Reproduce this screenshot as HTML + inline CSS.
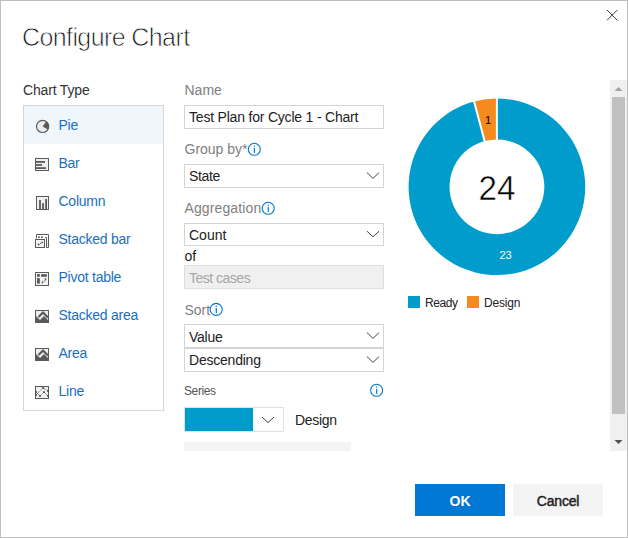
<!DOCTYPE html>
<html><head><meta charset="utf-8">
<style>
*{margin:0;padding:0;box-sizing:border-box}
html,body{width:628px;height:538px;overflow:hidden;background:#fff}
body{position:relative;font-family:"Liberation Sans",sans-serif;color:#222}
.frame{position:absolute;left:0;top:0;width:628px;height:538px;border:1px solid #bfbfbf}
.t{position:absolute;white-space:nowrap;line-height:1;font-size:14px}
.box{position:absolute;border:1px solid #d4d4d4;background:#fff}
.lbl{color:#808080}
.item{color:#1a6fc2;letter-spacing:-0.25px}
.chev{position:absolute}
</style></head><body>
<div class="frame"></div>

<!-- close X -->
<svg style="position:absolute;left:606px;top:9px" width="13" height="13" viewBox="0 0 13 13">
<path d="M1 1L11.3 11.3M11.3 1L1 11.3" stroke="#222" stroke-width="0.9" fill="none"/>
</svg>

<div class="t" style="left:22px;top:24.6px;font-size:25px;color:#111;letter-spacing:-0.6px;-webkit-text-stroke:0.75px #fff">Configure Chart</div>

<div class="t" style="left:23px;top:83px;color:#333;letter-spacing:-0.17px">Chart Type</div>

<!-- list box -->
<div class="box" style="left:23px;top:105px;width:141px;height:306px;border-color:#d6d6d6"></div>
<div style="position:absolute;left:24px;top:106px;width:139px;height:38px;background:#eff6fc"></div>

<div class="t item" style="left:58.5px;top:118px">Pie</div>
<div class="t item" style="left:58.5px;top:156px">Bar</div>
<div class="t item" style="left:58.5px;top:194px">Column</div>
<div class="t item" style="left:58.5px;top:232px">Stacked bar</div>
<div class="t item" style="left:58.5px;top:270px">Pivot table</div>
<div class="t item" style="left:58.5px;top:308px">Stacked area</div>
<div class="t item" style="left:58.5px;top:346px">Area</div>
<div class="t item" style="left:58.5px;top:384px">Line</div>

<!-- middle column -->
<div class="t lbl" style="left:184.5px;top:83px">Name</div>
<div class="box" style="left:184px;top:105px;width:200px;height:24px"></div>
<div class="t" style="left:189px;top:110px;letter-spacing:-0.2px">Test Plan for Cycle 1 - Chart</div>

<div class="t lbl" style="left:184.5px;top:142px">Group by*</div>
<div class="box" style="left:184px;top:164px;width:200px;height:24px"></div>
<div class="t" style="left:189px;top:169px;letter-spacing:-0.35px">State</div>

<div class="t lbl" style="left:184.5px;top:201px;letter-spacing:0.12px">Aggregation</div>
<div class="box" style="left:184px;top:223px;width:200px;height:23px"></div>
<div class="t" style="left:189px;top:228px">Count</div>
<div class="t" style="left:184.5px;top:249px">of</div>
<div class="box" style="left:184px;top:265px;width:200px;height:24px;background:#f0f0f0;border-color:#dedede"></div>
<div class="t" style="left:189px;top:271px;color:#a6a6a6;letter-spacing:-0.5px">Test cases</div>

<div class="t lbl" style="left:184.5px;top:303px">Sort</div>
<div class="box" style="left:184px;top:324px;width:200px;height:24px"></div>
<div class="t" style="left:189px;top:330px;letter-spacing:-0.25px">Value</div>
<div class="box" style="left:184px;top:348px;width:200px;height:24px"></div>
<div class="t" style="left:189px;top:353px;letter-spacing:-0.22px">Descending</div>

<div class="t" style="left:184px;top:384.7px;font-size:12px;color:#555;letter-spacing:-0.4px">Series</div>
<div class="box" style="left:184px;top:407px;width:100px;height:25px;border-color:#e0e0e0"></div>
<div style="position:absolute;left:185px;top:408px;width:68px;height:23px;background:#009ccc"></div>
<div class="t" style="left:295px;top:413px;letter-spacing:-0.3px">Design</div>
<div style="position:absolute;left:184px;top:442px;width:167px;height:9px;background:#f4f4f4"></div>

<!-- chart -->
<svg style="position:absolute;left:0;top:0" width="628" height="538">
<!-- donut -->
<path d="M496.90 98.50 A88.3 88.3 0 1 1 474.05 101.51 L484.63 141.02 A47.4 47.4 0 1 0 496.90 139.40 Z" fill="#009ccc"/>
<path d="M474.05 101.51 A88.3 88.3 0 0 1 496.90 98.50 L496.90 139.40 A47.4 47.4 0 0 0 484.63 141.02 Z" fill="#f58b1f"/>
<path d="M496.9 140 L496.9 97 M484.89 141.98 L473.79 100.54" stroke="#fff" stroke-width="2" fill="none"/>
<text transform="translate(497 0) scale(0.95 1) translate(-497 0)" x="497" y="200" font-family="Liberation Sans" font-size="35" text-anchor="middle" fill="#000" stroke="#fff" stroke-width="0.5">24</text>
<text x="488" y="124" font-family="Liberation Sans" font-size="11" text-anchor="middle" fill="#000">1</text>
<text x="505.5" y="259" font-family="Liberation Sans" font-size="11" text-anchor="middle" fill="#fff">23</text>

<!-- info icons -->
<g fill="none" stroke="#0078d4" stroke-width="1.1">
<circle cx="254.3" cy="149.3" r="6"/>
<circle cx="268.2" cy="208.3" r="6"/>
<circle cx="216.2" cy="309.4" r="6"/>
<circle cx="376.6" cy="390.3" r="6"/>
</g>
<g fill="#0078d4">
<rect x="253.8" y="145.6" width="1.2" height="1.2"/><rect x="253.8" y="147.9" width="1.2" height="5"/>
<rect x="267.7" y="204.6" width="1.2" height="1.2"/><rect x="267.7" y="206.9" width="1.2" height="5"/>
<rect x="215.7" y="305.7" width="1.2" height="1.2"/><rect x="215.7" y="308" width="1.2" height="5"/>
<rect x="376.1" y="386.6" width="1.2" height="1.2"/><rect x="376.1" y="388.9" width="1.2" height="5"/>
</g>

<!-- chevrons -->
<g fill="none" stroke="#444" stroke-width="1">
<path d="M367 172.7 L373 178.3 L379 172.7"/>
<path d="M367 231.2 L373 236.8 L379 231.2"/>
<path d="M367 332.7 L373 338.3 L379 332.7"/>
<path d="M367 356.7 L373 362.3 L379 356.7"/>
<path d="M262 417 L268 422.6 L274 417"/>
</g>


<!-- chart type icons -->
<g stroke="#5a5a5a" stroke-width="1">
<!-- pie -->
<circle cx="42.6" cy="126.4" r="6.1" fill="#ececec" stroke-width="1.2"/>
<path d="M42.6 126.4 L46.2 121.4 A6.1 6.1 0 0 1 47.9 129.5 Z" fill="#5a5a5a" stroke="none"/>
<!-- bar -->
<rect x="35.5" y="158.5" width="13" height="12" fill="#efefef"/>
<g stroke="none" fill="#5a5a5a"><rect x="36" y="161" width="9" height="1.8"/><rect x="36" y="164.1" width="6" height="1.8"/><rect x="36" y="167.2" width="10" height="1.8"/></g>
<!-- column -->
<rect x="36.5" y="196.5" width="12" height="13" fill="#efefef"/>
<g stroke="none" fill="#5a5a5a"><rect x="39.1" y="200" width="1.8" height="9.5"/><rect x="42.1" y="203.2" width="1.8" height="6.3"/><rect x="45.2" y="199" width="1.8" height="10.5"/></g>
<!-- stacked bar -->
<path d="M36.5 238.5 V234.5 H48.5 V247.5 H46.5 V237.5 H45" fill="none"/>
<rect x="35.5" y="239.5" width="9" height="8" fill="#f4f4f4"/>
<g stroke="none" fill="#5a5a5a"><rect x="38.1" y="236.4" width="1.7" height="1.6"/><rect x="41.1" y="236.4" width="1.7" height="1.6"/></g>
<path d="M37.5 244.5 L39.5 244.5 L41.5 242.5 L43 242.5 M38.5 243.5 V245.5 M42 241.5 V243.5" fill="none" stroke-width="0.9"/>
<!-- pivot -->
<rect x="35.5" y="272.5" width="13" height="13" fill="#f4f4f4"/>
<g stroke="none" fill="#5a5a5a"><rect x="37" y="274" width="2.8" height="2.8"/><rect x="41.1" y="274.2" width="5.8" height="2.6"/><rect x="37" y="278.1" width="2.8" height="5.6"/></g>
<path d="M41.5 282.5 L43 282.5 L45.5 280 V278.5 M42.5 281.5 V283.5 M44.5 279 H46.5" fill="none" stroke-width="0.9"/>
<!-- stacked area -->
<rect x="35.5" y="310.5" width="13" height="12" fill="#eeeeee"/>
<path d="M36 316 L40 320 L44 316 L48 320 V322 H36 Z" fill="#5a5a5a" stroke="none"/>
<path d="M38.5 317 L43 312.5 L48 317.5" fill="none" stroke-width="2.2"/>
<!-- area -->
<rect x="35.5" y="348.5" width="13" height="12" fill="#eeeeee"/>
<path d="M36 354 L40 358 L44 354 L48 358 V360 H36 Z" fill="#5a5a5a" stroke="none"/>
<path d="M38.5 355 L43 350.5 L48 355.5" fill="none" stroke-width="2.2"/>
<!-- line -->
<rect x="35.5" y="386.5" width="13" height="12" fill="#efefef"/>
<path d="M36 395 L43 388 L48 391 M36 392 L40 396 L44 392 L48 396" fill="none" stroke-width="0.8" stroke-dasharray="1 0.6"/>
<g stroke="none" fill="#333"><rect x="42.3" y="387.2" width="1.6" height="1.6"/><rect x="35.6" y="391.3" width="1.4" height="1.4"/><rect x="35.6" y="394.2" width="1.4" height="1.4"/><rect x="39.2" y="395.2" width="1.6" height="1.6"/><rect x="43.2" y="391.3" width="1.6" height="1.6"/><rect x="47.1" y="390.3" width="1.4" height="1.4"/><rect x="47.1" y="395.2" width="1.4" height="1.4"/></g>
</g>
</svg>

<!-- legend -->
<div style="position:absolute;left:408px;top:296px;width:12px;height:12px;background:#009ccc"></div>
<div class="t" style="left:425px;top:297px;font-size:12px;color:#222;letter-spacing:-0.4px">Ready</div>
<div style="position:absolute;left:467px;top:296px;width:12px;height:12px;background:#f58b1f"></div>
<div class="t" style="left:484px;top:297px;font-size:12px;color:#222;letter-spacing:-0.2px">Design</div>

<!-- scrollbar -->
<div style="position:absolute;left:610px;top:80px;width:17px;height:371px;background:#f0f0f0"></div>
<div style="position:absolute;left:612px;top:97px;width:13px;height:317px;background:#c1c1c1"></div>
<svg style="position:absolute;left:0;top:0" width="628" height="538"><path d="M614.5 91 L618.5 87 L622.5 91 Z" fill="#a3a3a3"/><path d="M614.5 440 L618.5 444 L622.5 440 Z" fill="#505050"/></svg>

<!-- buttons -->
<div style="position:absolute;left:415px;top:484px;width:90px;height:32px;background:#0078d4"></div>
<div class="t" style="left:415px;top:494px;width:90px;text-align:center;font-size:14px;font-weight:bold;color:#fff">OK</div>
<div style="position:absolute;left:513px;top:484px;width:90px;height:32px;background:#f4f4f4"></div>
<div class="t" style="left:513px;top:494px;width:90px;text-align:center;font-size:14px;letter-spacing:-0.2px;color:#222;-webkit-text-stroke:0.45px #222">Cancel</div>
</body></html>
